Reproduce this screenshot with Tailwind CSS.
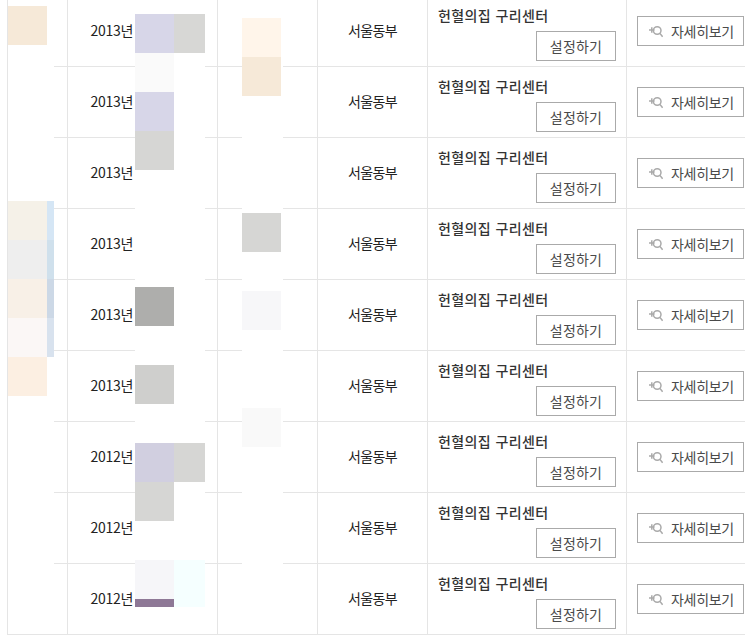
<!DOCTYPE html>
<html lang="ko">
<head>
<meta charset="utf-8">
<script src="https://cdn.jsdelivr.net/npm/@tailwindcss/browser@4"></script>
</head>
<body class="bg-white">
<div class="relative h-[637px] w-[745px] overflow-hidden bg-white font-['Noto_Sans_CJK_KR','Liberation_Sans',sans-serif] text-[14px] text-[#333]">
  <div class="-mt-[4px] ml-[7px] border-l border-[#e5e5e5]">
    <!-- rows -->
    <div class="flex h-[71px] border-b border-[#e5e5e5]"><div class="w-[60px] border-r border-[#e5e5e5]"></div><div class="flex w-[150px] items-center justify-end border-r border-[#e5e5e5] pr-[84px] pb-[2px] tracking-[-0.3px] text-[#222]">2013년</div><div class="w-[100px] border-r border-[#e5e5e5]"></div><div class="flex w-[110px] items-center justify-center border-r border-[#e5e5e5] pb-[2px] tracking-[-0.6px] text-[#222]">서울동부</div><div class="relative w-[199px] border-r border-[#e5e5e5]"><p class="pt-[9px] pl-[10px] leading-[20px] font-medium tracking-[0.4px] text-[#333]">헌혈의집 구리센터</p><button class="absolute top-[35px] left-[108px] h-[30px] w-[80px] border border-[#aaa] text-center text-[#4a4a4a] tracking-[0.2px]">설정하기</button></div><div class="flex-1 pt-[20px] pl-[10px]"><button class="flex h-[30px] w-[107px] items-center border border-[#aaa] pl-[11px] text-[#4a4a4a] tracking-[-0.3px]"><svg class="mr-[8px] h-[14px] w-[14px] shrink-0" viewBox="0 0 14 14" fill="none" stroke="#aaaaaa" stroke-width="1.5"><circle cx="8.2" cy="6.5" r="3.8"/><path d="M10.9 9.4l2.7 3.4M0 6h5.5M2.8 3.2v5.6"/></svg>자세히보기</button></div></div>
    <div class="flex h-[71px] border-b border-[#e5e5e5]"><div class="w-[60px] border-r border-[#e5e5e5]"></div><div class="flex w-[150px] items-center justify-end border-r border-[#e5e5e5] pr-[84px] pb-[2px] tracking-[-0.3px] text-[#222]">2013년</div><div class="w-[100px] border-r border-[#e5e5e5]"></div><div class="flex w-[110px] items-center justify-center border-r border-[#e5e5e5] pb-[2px] tracking-[-0.6px] text-[#222]">서울동부</div><div class="relative w-[199px] border-r border-[#e5e5e5]"><p class="pt-[9px] pl-[10px] leading-[20px] font-medium tracking-[0.4px] text-[#333]">헌혈의집 구리센터</p><button class="absolute top-[35px] left-[108px] h-[30px] w-[80px] border border-[#aaa] text-center text-[#4a4a4a] tracking-[0.2px]">설정하기</button></div><div class="flex-1 pt-[20px] pl-[10px]"><button class="flex h-[30px] w-[107px] items-center border border-[#aaa] pl-[11px] text-[#4a4a4a] tracking-[-0.3px]"><svg class="mr-[8px] h-[14px] w-[14px] shrink-0" viewBox="0 0 14 14" fill="none" stroke="#aaaaaa" stroke-width="1.5"><circle cx="8.2" cy="6.5" r="3.8"/><path d="M10.9 9.4l2.7 3.4M0 6h5.5M2.8 3.2v5.6"/></svg>자세히보기</button></div></div>
    <div class="flex h-[71px] border-b border-[#e5e5e5]"><div class="w-[60px] border-r border-[#e5e5e5]"></div><div class="flex w-[150px] items-center justify-end border-r border-[#e5e5e5] pr-[84px] pb-[2px] tracking-[-0.3px] text-[#222]">2013년</div><div class="w-[100px] border-r border-[#e5e5e5]"></div><div class="flex w-[110px] items-center justify-center border-r border-[#e5e5e5] pb-[2px] tracking-[-0.6px] text-[#222]">서울동부</div><div class="relative w-[199px] border-r border-[#e5e5e5]"><p class="pt-[9px] pl-[10px] leading-[20px] font-medium tracking-[0.4px] text-[#333]">헌혈의집 구리센터</p><button class="absolute top-[35px] left-[108px] h-[30px] w-[80px] border border-[#aaa] text-center text-[#4a4a4a] tracking-[0.2px]">설정하기</button></div><div class="flex-1 pt-[20px] pl-[10px]"><button class="flex h-[30px] w-[107px] items-center border border-[#aaa] pl-[11px] text-[#4a4a4a] tracking-[-0.3px]"><svg class="mr-[8px] h-[14px] w-[14px] shrink-0" viewBox="0 0 14 14" fill="none" stroke="#aaaaaa" stroke-width="1.5"><circle cx="8.2" cy="6.5" r="3.8"/><path d="M10.9 9.4l2.7 3.4M0 6h5.5M2.8 3.2v5.6"/></svg>자세히보기</button></div></div>
    <div class="flex h-[71px] border-b border-[#e5e5e5]"><div class="w-[60px] border-r border-[#e5e5e5]"></div><div class="flex w-[150px] items-center justify-end border-r border-[#e5e5e5] pr-[84px] pb-[2px] tracking-[-0.3px] text-[#222]">2013년</div><div class="w-[100px] border-r border-[#e5e5e5]"></div><div class="flex w-[110px] items-center justify-center border-r border-[#e5e5e5] pb-[2px] tracking-[-0.6px] text-[#222]">서울동부</div><div class="relative w-[199px] border-r border-[#e5e5e5]"><p class="pt-[9px] pl-[10px] leading-[20px] font-medium tracking-[0.4px] text-[#333]">헌혈의집 구리센터</p><button class="absolute top-[35px] left-[108px] h-[30px] w-[80px] border border-[#aaa] text-center text-[#4a4a4a] tracking-[0.2px]">설정하기</button></div><div class="flex-1 pt-[20px] pl-[10px]"><button class="flex h-[30px] w-[107px] items-center border border-[#aaa] pl-[11px] text-[#4a4a4a] tracking-[-0.3px]"><svg class="mr-[8px] h-[14px] w-[14px] shrink-0" viewBox="0 0 14 14" fill="none" stroke="#aaaaaa" stroke-width="1.5"><circle cx="8.2" cy="6.5" r="3.8"/><path d="M10.9 9.4l2.7 3.4M0 6h5.5M2.8 3.2v5.6"/></svg>자세히보기</button></div></div>
    <div class="flex h-[71px] border-b border-[#e5e5e5]"><div class="w-[60px] border-r border-[#e5e5e5]"></div><div class="flex w-[150px] items-center justify-end border-r border-[#e5e5e5] pr-[84px] pb-[2px] tracking-[-0.3px] text-[#222]">2013년</div><div class="w-[100px] border-r border-[#e5e5e5]"></div><div class="flex w-[110px] items-center justify-center border-r border-[#e5e5e5] pb-[2px] tracking-[-0.6px] text-[#222]">서울동부</div><div class="relative w-[199px] border-r border-[#e5e5e5]"><p class="pt-[9px] pl-[10px] leading-[20px] font-medium tracking-[0.4px] text-[#333]">헌혈의집 구리센터</p><button class="absolute top-[35px] left-[108px] h-[30px] w-[80px] border border-[#aaa] text-center text-[#4a4a4a] tracking-[0.2px]">설정하기</button></div><div class="flex-1 pt-[20px] pl-[10px]"><button class="flex h-[30px] w-[107px] items-center border border-[#aaa] pl-[11px] text-[#4a4a4a] tracking-[-0.3px]"><svg class="mr-[8px] h-[14px] w-[14px] shrink-0" viewBox="0 0 14 14" fill="none" stroke="#aaaaaa" stroke-width="1.5"><circle cx="8.2" cy="6.5" r="3.8"/><path d="M10.9 9.4l2.7 3.4M0 6h5.5M2.8 3.2v5.6"/></svg>자세히보기</button></div></div>
    <div class="flex h-[71px] border-b border-[#e5e5e5]"><div class="w-[60px] border-r border-[#e5e5e5]"></div><div class="flex w-[150px] items-center justify-end border-r border-[#e5e5e5] pr-[84px] pb-[2px] tracking-[-0.3px] text-[#222]">2013년</div><div class="w-[100px] border-r border-[#e5e5e5]"></div><div class="flex w-[110px] items-center justify-center border-r border-[#e5e5e5] pb-[2px] tracking-[-0.6px] text-[#222]">서울동부</div><div class="relative w-[199px] border-r border-[#e5e5e5]"><p class="pt-[9px] pl-[10px] leading-[20px] font-medium tracking-[0.4px] text-[#333]">헌혈의집 구리센터</p><button class="absolute top-[35px] left-[108px] h-[30px] w-[80px] border border-[#aaa] text-center text-[#4a4a4a] tracking-[0.2px]">설정하기</button></div><div class="flex-1 pt-[20px] pl-[10px]"><button class="flex h-[30px] w-[107px] items-center border border-[#aaa] pl-[11px] text-[#4a4a4a] tracking-[-0.3px]"><svg class="mr-[8px] h-[14px] w-[14px] shrink-0" viewBox="0 0 14 14" fill="none" stroke="#aaaaaa" stroke-width="1.5"><circle cx="8.2" cy="6.5" r="3.8"/><path d="M10.9 9.4l2.7 3.4M0 6h5.5M2.8 3.2v5.6"/></svg>자세히보기</button></div></div>
    <div class="flex h-[71px] border-b border-[#e5e5e5]"><div class="w-[60px] border-r border-[#e5e5e5]"></div><div class="flex w-[150px] items-center justify-end border-r border-[#e5e5e5] pr-[84px] pb-[2px] tracking-[-0.3px] text-[#222]">2012년</div><div class="w-[100px] border-r border-[#e5e5e5]"></div><div class="flex w-[110px] items-center justify-center border-r border-[#e5e5e5] pb-[2px] tracking-[-0.6px] text-[#222]">서울동부</div><div class="relative w-[199px] border-r border-[#e5e5e5]"><p class="pt-[9px] pl-[10px] leading-[20px] font-medium tracking-[0.4px] text-[#333]">헌혈의집 구리센터</p><button class="absolute top-[35px] left-[108px] h-[30px] w-[80px] border border-[#aaa] text-center text-[#4a4a4a] tracking-[0.2px]">설정하기</button></div><div class="flex-1 pt-[20px] pl-[10px]"><button class="flex h-[30px] w-[107px] items-center border border-[#aaa] pl-[11px] text-[#4a4a4a] tracking-[-0.3px]"><svg class="mr-[8px] h-[14px] w-[14px] shrink-0" viewBox="0 0 14 14" fill="none" stroke="#aaaaaa" stroke-width="1.5"><circle cx="8.2" cy="6.5" r="3.8"/><path d="M10.9 9.4l2.7 3.4M0 6h5.5M2.8 3.2v5.6"/></svg>자세히보기</button></div></div>
    <div class="flex h-[71px] border-b border-[#e5e5e5]"><div class="w-[60px] border-r border-[#e5e5e5]"></div><div class="flex w-[150px] items-center justify-end border-r border-[#e5e5e5] pr-[84px] pb-[2px] tracking-[-0.3px] text-[#222]">2012년</div><div class="w-[100px] border-r border-[#e5e5e5]"></div><div class="flex w-[110px] items-center justify-center border-r border-[#e5e5e5] pb-[2px] tracking-[-0.6px] text-[#222]">서울동부</div><div class="relative w-[199px] border-r border-[#e5e5e5]"><p class="pt-[9px] pl-[10px] leading-[20px] font-medium tracking-[0.4px] text-[#333]">헌혈의집 구리센터</p><button class="absolute top-[35px] left-[108px] h-[30px] w-[80px] border border-[#aaa] text-center text-[#4a4a4a] tracking-[0.2px]">설정하기</button></div><div class="flex-1 pt-[20px] pl-[10px]"><button class="flex h-[30px] w-[107px] items-center border border-[#aaa] pl-[11px] text-[#4a4a4a] tracking-[-0.3px]"><svg class="mr-[8px] h-[14px] w-[14px] shrink-0" viewBox="0 0 14 14" fill="none" stroke="#aaaaaa" stroke-width="1.5"><circle cx="8.2" cy="6.5" r="3.8"/><path d="M10.9 9.4l2.7 3.4M0 6h5.5M2.8 3.2v5.6"/></svg>자세히보기</button></div></div>
    <div class="flex h-[71px] border-b border-[#e5e5e5]"><div class="w-[60px] border-r border-[#e5e5e5]"></div><div class="flex w-[150px] items-center justify-end border-r border-[#e5e5e5] pr-[84px] pb-[2px] tracking-[-0.3px] text-[#222]">2012년</div><div class="w-[100px] border-r border-[#e5e5e5]"></div><div class="flex w-[110px] items-center justify-center border-r border-[#e5e5e5] pb-[2px] tracking-[-0.6px] text-[#222]">서울동부</div><div class="relative w-[199px] border-r border-[#e5e5e5]"><p class="pt-[9px] pl-[10px] leading-[20px] font-medium tracking-[0.4px] text-[#333]">헌혈의집 구리센터</p><button class="absolute top-[35px] left-[108px] h-[30px] w-[80px] border border-[#aaa] text-center text-[#4a4a4a] tracking-[0.2px]">설정하기</button></div><div class="flex-1 pt-[20px] pl-[10px]"><button class="flex h-[30px] w-[107px] items-center border border-[#aaa] pl-[11px] text-[#4a4a4a] tracking-[-0.3px]"><svg class="mr-[8px] h-[14px] w-[14px] shrink-0" viewBox="0 0 14 14" fill="none" stroke="#aaaaaa" stroke-width="1.5"><circle cx="8.2" cy="6.5" r="3.8"/><path d="M10.9 9.4l2.7 3.4M0 6h5.5M2.8 3.2v5.6"/></svg>자세히보기</button></div></div>
  </div>

  <!-- white patches over the row lines -->
  <div class="absolute top-0 left-[8px] h-[634px] w-[46px] bg-white"></div>
  <div class="absolute top-0 left-[135px] h-[634px] w-[70px] bg-white"></div>
  <div class="absolute top-0 left-[242px] h-[634px] w-[41px] bg-white"></div>

  <!-- left column tiles -->
  <div class="absolute top-[6px] left-[8px] h-[39px] w-[39px] bg-[#f6e9d8]"></div>
  <div class="absolute top-[201px] left-[8px] h-[39px] w-[39px] bg-[#f5f1e8]"></div>
  <div class="absolute top-[240px] left-[8px] h-[39px] w-[39px] bg-[#eeeeee]"></div>
  <div class="absolute top-[279px] left-[8px] h-[39px] w-[39px] bg-[#f8f0e7]"></div>
  <div class="absolute top-[318px] left-[8px] h-[39px] w-[39px] bg-[#fbf7f6]"></div>
  <div class="absolute top-[357px] left-[8px] h-[39px] w-[39px] bg-[#fcefe2]"></div>
  <div class="absolute top-[201px] left-[47px] h-[39px] w-[7px] bg-[#d5e6f5]"></div>
  <div class="absolute top-[240px] left-[47px] h-[39px] w-[7px] bg-[#cfe0ec]"></div>
  <div class="absolute top-[279px] left-[47px] h-[39px] w-[7px] bg-[#ccd8e6]"></div>
  <div class="absolute top-[318px] left-[47px] h-[39px] w-[7px] bg-[#d8e2ee]"></div>

  <!-- second column tiles -->
  <div class="absolute top-[14px] left-[135px] h-[39px] w-[39px] bg-[#d7d6e8]"></div>
  <div class="absolute top-[14px] left-[174px] h-[39px] w-[31px] bg-[#d7d7d5]"></div>
  <div class="absolute top-[53px] left-[135px] h-[39px] w-[39px] bg-[#fafafa]"></div>
  <div class="absolute top-[92px] left-[135px] h-[39px] w-[39px] bg-[#d7d6e8]"></div>
  <div class="absolute top-[131px] left-[135px] h-[39px] w-[39px] bg-[#d6d6d4]"></div>
  <div class="absolute top-[287px] left-[135px] h-[39px] w-[39px] bg-[#aeaeac]"></div>
  <div class="absolute top-[365px] left-[135px] h-[39px] w-[39px] bg-[#cfcfcd]"></div>
  <div class="absolute top-[443px] left-[135px] h-[39px] w-[39px] bg-[#d1cfe0]"></div>
  <div class="absolute top-[443px] left-[174px] h-[39px] w-[31px] bg-[#d6d6d4]"></div>
  <div class="absolute top-[482px] left-[135px] h-[39px] w-[39px] bg-[#d6d6d4]"></div>
  <div class="absolute top-[560px] left-[135px] h-[39px] w-[39px] bg-[#f6f6f9]"></div>
  <div class="absolute top-[599px] left-[135px] h-[8px] w-[39px] bg-[#8e7896]"></div>
  <div class="absolute top-[560px] left-[174px] h-[47px] w-[31px] bg-[#f5ffff]"></div>

  <!-- third column tiles -->
  <div class="absolute top-[18px] left-[242px] h-[39px] w-[39px] bg-[#fff5ea]"></div>
  <div class="absolute top-[57px] left-[242px] h-[39px] w-[39px] bg-[#f6e9d8]"></div>
  <div class="absolute top-[213px] left-[242px] h-[39px] w-[39px] bg-[#d6d6d4]"></div>
  <div class="absolute top-[291px] left-[242px] h-[39px] w-[39px] bg-[#f7f7f9]"></div>
  <div class="absolute top-[408px] left-[242px] h-[39px] w-[39px] bg-[#f9f9f9]"></div>
</div>
</body>
</html>
